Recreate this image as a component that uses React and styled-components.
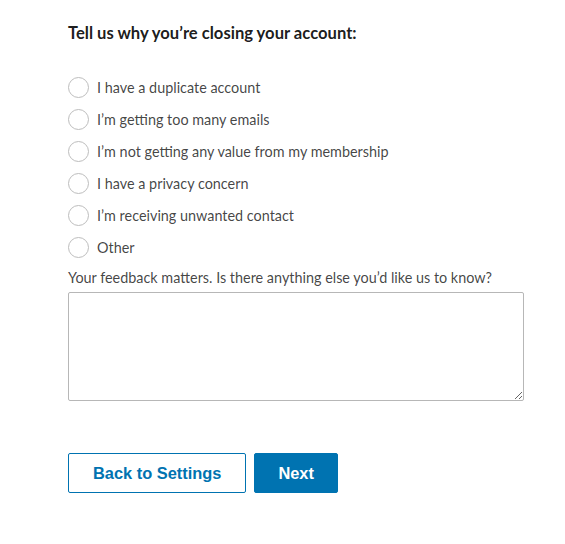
import React from 'react';
import styled, { createGlobalStyle } from 'styled-components';

const GlobalStyle = createGlobalStyle`
  body {
    margin: 0;
    background: #fff;
    font-family: Lato, "Open Sans", sans-serif;
  }
`;

const Page = styled.div`
  padding: 22px 0 0 68px;
  width: 456px;
`;

const Heading = styled.h2`
  margin: 0 0 33px;
  font-size: 16.6px;
  line-height: 22px;
  font-weight: 700;
  color: rgba(0, 0, 0, 0.9);
`;

const Options = styled.div`
  display: flex;
  flex-direction: column;
  gap: 11px;
`;

const Option = styled.label`
  display: flex;
  align-items: center;
  gap: 8px;
  height: 21px;
  font-size: 14.4px;
  color: rgba(0, 0, 0, 0.74);
  cursor: pointer;
`;

const Radio = styled.input.attrs({ type: 'radio', name: 'reason' })`
  appearance: none;
  margin: 0;
  width: 21px;
  height: 21px;
  border: 1px solid #bdbdbd;
  border-radius: 50%;
  background: #fff;
  flex-shrink: 0;
`;

const FeedbackLabel = styled.label`
  display: block;
  margin-top: 10px;
  font-size: 14.4px;
  line-height: 20px;
  color: rgba(0, 0, 0, 0.74);
`;

const TextArea = styled.textarea`
  display: block;
  box-sizing: border-box;
  margin-top: 4px;
  width: 456px;
  height: 109px;
  border: 1px solid #b7b7b7;
  border-radius: 2px;
  resize: vertical;
  font: inherit;
`;

const Actions = styled.div`
  display: flex;
  gap: 8px;
  margin-top: 52px;
`;

const Button = styled.button`
  box-sizing: border-box;
  height: 40px;
  padding: 0 ${(p) => (p.$primary ? '23px' : '24px')};
  border: 1px solid #0073b1;
  border-radius: 2px;
  background: ${(p) => (p.$primary ? '#0073b1' : '#fff')};
  color: ${(p) => (p.$primary ? '#fff' : '#0073b1')};
  font-family: "Liberation Sans", Arial, sans-serif;
  font-size: 16.4px;
  font-weight: 700;
  cursor: pointer;
`;

const reasons = [
  'I have a duplicate account',
  'I’m getting too many emails',
  'I’m not getting any value from my membership',
  'I have a privacy concern',
  'I’m receiving unwanted contact',
  'Other',
];

export default function App() {
  return (
    <>
      <GlobalStyle />
      <Page>
        <Heading>Tell us why you’re closing your account:</Heading>
        <Options>
          {reasons.map((r) => (
            <Option key={r}>
              <Radio />
              {r}
            </Option>
          ))}
        </Options>
        <FeedbackLabel htmlFor="feedback">
          Your feedback matters. Is there anything else you’d like us to know?
        </FeedbackLabel>
        <TextArea id="feedback" />
        <Actions>
          <Button>Back to Settings</Button>
          <Button $primary>Next</Button>
        </Actions>
      </Page>
    </>
  );
}
